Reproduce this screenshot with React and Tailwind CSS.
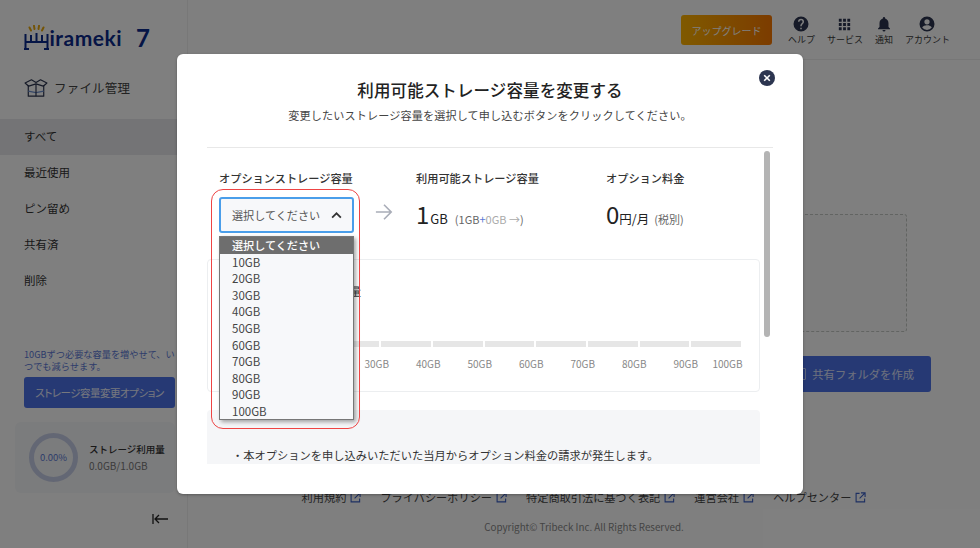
const JP = "font-['Noto_Sans_CJK_JP','Noto_Sans',sans-serif]";

function ExternalIcon() {
  return (
    <svg viewBox="0 0 12 12" className="w-[11px] h-[11px] text-[#3b5fc4]" fill="none" stroke="currentColor" strokeWidth="1.2">
      <path d="M5 1.5H1.2v9.3h9.3V7" />
      <path d="M6.5 1h4.5v4.5M11 1 5 7" />
    </svg>
  );
}

function Logo() {
  return (
    <div className="flex items-end h-[26px] text-[#0b2a8c]">
      <svg viewBox="0 0 25 25" className="w-[25px] h-[25px]" fill="none">
        <path d="M7 5.5 5.5 2.5M10.5 4 10 .8M14.5 4 15 .8M18 5.5l1.5-3" stroke="#e8a90c" strokeWidth="2" strokeLinecap="round" />
        <path d="M1.5 9v15M23.5 9v15M0 24h5M20 24h5" stroke="currentColor" strokeWidth="2" />
        <path d="M7 10v7h11v-7M1.5 17h22M12.5 8v9" stroke="currentColor" strokeWidth="2" />
      </svg>
      <span className="font-['Lato',sans-serif] font-bold text-[21px] leading-[24px] tracking-[0.5px] ml-[0.5px]">irameki</span>
      <span className="font-['Lato',sans-serif] font-bold text-[24px] leading-[24px] ml-[14px]">7</span>
    </div>
  );
}

function BoxIcon() {
  return (
    <svg viewBox="0 0 26 22" className="w-[24px] h-[20px]" fill="none" stroke="#2c3550" strokeWidth="1.3" strokeLinejoin="round">
      <path d="M4.5 8v12h17V8" />
      <path d="M4.5 14.5 13 16l8.5-1.5" stroke="#6d8fd0" />
      <path d="M13 6.5V20" />
      <path d="M1 5.5 8 2l5 3 5-3 7 3.5-4 3.5L13 6.5 5 9z" />
    </svg>
  );
}

function HeaderIcon({ label, children }) {
  return (
    <div className="flex flex-col items-center gap-[1px]">
      <div className="h-[18px] flex items-center justify-center">{children}</div>
      <span className="text-[9px] leading-[12px] tracking-[0px] text-[#3b3b3b]">{label}</span>
    </div>
  );
}

function Sidebar() {
  const items = ["すべて", "最近使用", "ピン留め", "共有済", "削除"];
  return (
    <aside className="w-[188px] h-full shrink-0 border-r border-[#f0f0f0] flex flex-col">
      <div className="pl-[24px] pt-[24px]"><Logo /></div>
      <div className="flex items-center gap-[6px] pl-[24px] mt-[26px] h-[24px]">
        <BoxIcon />
        <span className="text-[12.5px] text-[#444] tracking-[0.2px]">ファイル管理</span>
      </div>
      <nav className="mt-[19px] flex flex-col">
        {items.map((t, i) => (
          <div key={t} className={`h-[36px] flex items-center pl-[24px] text-[11.5px] text-[#333] ${i === 0 ? "bg-[#e8e9ec]" : ""}`}>{t}</div>
        ))}
      </nav>
      <p className="mt-[49px] pl-[24px] text-[9.2px] leading-[12px] text-[#5b78d6] whitespace-nowrap">10GBずつ必要な容量を増やせて、い<br />つでも減らせます。</p>
      <div className="ml-[24px] mr-[12px] mt-[5px] h-[31px] rounded-[3px] bg-[#4c72e8] text-white/90 text-[10.5px] tracking-[-0.5px] [font-feature-settings:'palt'] flex items-center justify-center whitespace-nowrap">ストレージ容量変更オプション</div>
      <div className="mt-[14px] ml-[15px] mr-[12px] h-[71px] rounded-[6px] bg-[#f7f8fa] flex items-center pl-[14px] gap-[11px]">
        <div className="w-[49px] h-[49px] rounded-full border-[5px] border-[#c7cfe8] flex items-center justify-center text-[9.5px] text-[#5b78d6]">0.00%</div>
        <div>
          <div className="text-[9.5px] leading-[14px] font-medium text-[#333]">ストレージ利用量</div>
          <div className="mt-[2px] text-[10px] leading-[16px] text-[#777]">0.0GB/1.0GB</div>
        </div>
      </div>
      <div className="flex justify-end pr-[19px] mt-[21px]">
        <svg viewBox="0 0 16 10" className="w-[16px] h-[10px]" fill="none" stroke="#222" strokeWidth="1.3">
          <path d="M1 0v10M16 5H3M7 1 3 5l4 4" />
        </svg>
      </div>
    </aside>
  );
}

function Main() {
  const links = ["利用規約", "プライバシーポリシー", "特定商取引法に基づく表記", "運営会社", "ヘルプセンター"];
  return (
    <main className="flex-1 h-full flex flex-col min-w-0">
      <header className="h-[60px] shrink-0 border-b border-[#eee] flex items-start justify-end pt-[15px] pr-[30px]">
        <div className="w-[91px] h-[30px] rounded-[3px] bg-gradient-to-r from-[#ffb300] to-[#f87800] text-white text-[10px] flex items-center justify-center mr-[16px]">アップグレード</div>
        <div className="flex gap-[12px]">
          <HeaderIcon label="ヘルプ">
            <svg viewBox="0 0 24 24" className="w-[18px] h-[18px]" fill="#2c3550"><path d="M12 2a10 10 0 1 0 0 20 10 10 0 0 0 0-20Zm1 17h-2v-2h2v2Zm2.07-7.75-.9.92C13.45 12.9 13 13.5 13 15h-2v-.5c0-1.1.45-2.1 1.17-2.83l1.24-1.26A2 2 0 1 0 10 9H8a4 4 0 1 1 8 0c0 .88-.36 1.68-.93 2.25Z" /></svg>
          </HeaderIcon>
          <HeaderIcon label="サービス">
            <svg viewBox="0 0 24 24" className="w-[17px] h-[17px]" fill="#2c3550"><path d="M4 8h4V4H4v4Zm6 12h4v-4h-4v4Zm-6 0h4v-4H4v4Zm0-6h4v-4H4v4Zm6 0h4v-4h-4v4Zm6-10v4h4V4h-4Zm-6 4h4V4h-4v4Zm6 6h4v-4h-4v4Zm0 6h4v-4h-4v4Z" /></svg>
          </HeaderIcon>
          <HeaderIcon label="通知">
            <svg viewBox="0 0 24 24" className="w-[18px] h-[18px]" fill="#2c3550"><path d="M12 22a2 2 0 0 0 2-2h-4a2 2 0 0 0 2 2Zm6-6v-5c0-3.07-1.63-5.64-4.5-6.32V4a1.5 1.5 0 0 0-3 0v.68C7.64 5.36 6 7.92 6 11v5l-2 2v1h16v-1l-2-2Z" /></svg>
          </HeaderIcon>
          <HeaderIcon label="アカウント">
            <svg viewBox="0 0 24 24" className="w-[18px] h-[18px]" fill="#2c3550"><path d="M12 2a10 10 0 1 0 0 20 10 10 0 0 0 0-20Zm0 3.5a3.5 3.5 0 1 1 0 7 3.5 3.5 0 0 1 0-7ZM12 20a8 8 0 0 1-6.4-3.2c.03-2.1 4.27-3.3 6.4-3.3s6.37 1.2 6.4 3.3A8 8 0 0 1 12 20Z" /></svg>
          </HeaderIcon>
        </div>
      </header>
      <div className="flex-1 flex flex-col items-end pr-[49px] pt-[154px] min-h-0">
        <div className="w-[660px] h-[118px] border border-dashed border-[#c4c8c4] bg-[#fafbfa] rounded-[3px] mr-[24px]" />
        <div className="mt-[24px] w-[300px] h-[36px] rounded-[3px] bg-[#4c72e8] text-white/80 text-[11.3px] flex items-center justify-end pr-[17px] gap-[6px]">
          <span className="w-[10px] h-[12px] border border-white/60 rounded-[1px]" />
          共有フォルダを作成
        </div>
      </div>
      <footer className="shrink-0 h-[60px] flex flex-col items-center">
        <div className="flex gap-[19px] text-[11.2px] leading-[18px] text-[#444]">
          {links.map((l) => (
            <span key={l} className="flex items-center gap-[4px]">{l}<ExternalIcon /></span>
          ))}
        </div>
        <div className="mt-[13px] text-[9.8px] leading-[16px] text-[#888]">Copyright© Tribeck Inc. All Rights Reserved.</div>
      </footer>
    </main>
  );
}

function Dropdown() {
  const opts = ["10GB", "20GB", "30GB", "40GB", "50GB", "60GB", "70GB", "80GB", "90GB", "100GB"];
  return (
    <div className="absolute left-[12px] top-[49px] w-[135px] z-10">
      <div className="w-[149px] h-[240px] -ml-[8px] -mt-[8px] absolute border border-[#ee4444] rounded-[12px]" />
      <div className="h-[36px] rounded-[3px] border-2 border-[#4a9eea] bg-[#f7f8fa] flex items-center justify-between pl-[11px] pr-[10px] text-[11.1px] text-[#555]">
        選択してください
        <svg viewBox="0 0 12 8" className="w-[11px] h-[7px]" fill="none" stroke="#333" strokeWidth="2"><path d="M1 6.5 6 1.5l5 5" /></svg>
      </div>
      <ul className="mt-[3px] h-[184px] border border-[#777] bg-[#f7f8fa] shadow-[2px_2px_4px_rgba(0,0,0,0.35)] text-[11.5px] leading-[16.6px] text-[#444]">
        <li className="bg-[#6e6e6e] text-white pl-[12px] text-[11.1px] font-medium">選択してください</li>
        {opts.map((o) => <li key={o} className="pl-[12px]">{o}</li>)}
      </ul>
    </div>
  );
}

function Modal() {
  const labels = ["10GB", "20GB", "30GB", "40GB", "50GB", "60GB", "70GB", "80GB", "90GB"];
  return (
    <div className="absolute left-[177px] top-[54px] w-[626px] h-[440px] bg-white rounded-[6px] shadow-[0_1px_3px_rgba(0,0,0,0.3)] flex flex-col px-[30px]">
      <button className="absolute right-[28px] top-[16px] w-[16px] h-[16px] rounded-full bg-[#2c3550] flex items-center justify-center">
        <svg viewBox="0 0 10 10" className="w-[8px] h-[8px]" fill="none" stroke="#fff" strokeWidth="2"><path d="m1.5 1.5 7 7M8.5 1.5l-7 7" /></svg>
      </button>
      <h2 className="mt-[23px] text-center text-[16.5px] leading-[26px] font-medium text-[#222] tracking-[0.1px]">利用可能ストレージ容量を変更する</h2>
      <p className="mt-[3px] text-center text-[11.1px] leading-[18px] text-[#444] tracking-[0.15px]">変更したいストレージ容量を選択して申し込むボタンをクリックしてください。</p>
      <div className="relative mt-[23px] h-[317px] border-t border-[#e8e8e8]">
        <div className="absolute right-[3px] top-[3px] w-[6px] h-[186px] rounded-full bg-[#b4b4b4] z-20" />
        <div className="w-[553px] h-[316px] overflow-hidden">
          <div className="flex pl-[12px] pt-[21px] h-[111px]">
            <div className="w-[135px] shrink-0 text-[11.2px] leading-[18px] font-medium text-[#333] whitespace-nowrap">オプションストレージ容量</div>
            <div className="w-[62px] pt-[34px] pl-[21px]">
              <svg viewBox="0 0 20 20" className="w-[18px] h-[18px]" fill="none" stroke="#a9adb8" strokeWidth="1.8"><path d="M1 10h17M10 2l8 8-8 8" /></svg>
            </div>
            <div className="w-[190px]">
              <div className="text-[11.2px] leading-[18px] font-medium text-[#333]">利用可能ストレージ容量</div>
              <div className="mt-[12px] flex items-baseline text-[#222]">
                <span className="text-[24px] leading-[30px]">1</span>
                <span className="text-[13px] ml-[1px]">GB</span>
                <span className="text-[11px] ml-[7px] text-[#666]">(1GB<span className="text-[#5b78d6]">+</span><span className="text-[#aaa]">0GB →</span>)</span>
              </div>
            </div>
            <div>
              <div className="text-[11.2px] leading-[18px] font-medium text-[#333]">オプション料金</div>
              <div className="mt-[12px] flex items-baseline text-[#222]">
                <span className="text-[24px] leading-[30px]">0</span>
                <span className="text-[12.5px]">円/月</span>
                <span className="text-[11px] ml-[5px] text-[#666]">(税別)</span>
              </div>
            </div>
          </div>
          <div className="h-[133px] border border-[#eceef0] rounded-[4px] relative">
            <div className="pl-[142px] pt-[22px] text-[11px] leading-[18px] text-[#333]">量</div>
            <div className="ml-[18px] mt-[41px] w-[515px] flex gap-[2px]">
              {Array.from({ length: 10 }, (_, i) => <div key={i} className="flex-1 h-[6px] bg-[#e6e6e6]" />)}
            </div>
            <div className="ml-[40px] mt-[10px] flex text-[10px] leading-[14px] text-[#888]">
              {labels.map((l) => <span key={l} className="w-[51.5px] text-center">{l}</span>)}
              <span className="w-[31px] text-right">100GB</span>
            </div>
          </div>
          <div className="mt-[18px] h-[100px] bg-[#f5f6f8] rounded-t-[4px] pl-[25px] pt-[35px] text-[11.25px] leading-[20px] text-[#333]">・本オプションを申し込みいただいた当月からオプション料金の請求が発生します。</div>
        </div>
        <Dropdown />
      </div>
    </div>
  );
}

export default function App() {
  return (
    <div className={`relative w-[980px] h-[548px] overflow-hidden bg-white ${JP}`}>
      <div className="flex h-full">
        <Sidebar />
        <Main />
      </div>
      <div className="absolute inset-0 bg-black/50" />
      <Modal />
    </div>
  );
}
